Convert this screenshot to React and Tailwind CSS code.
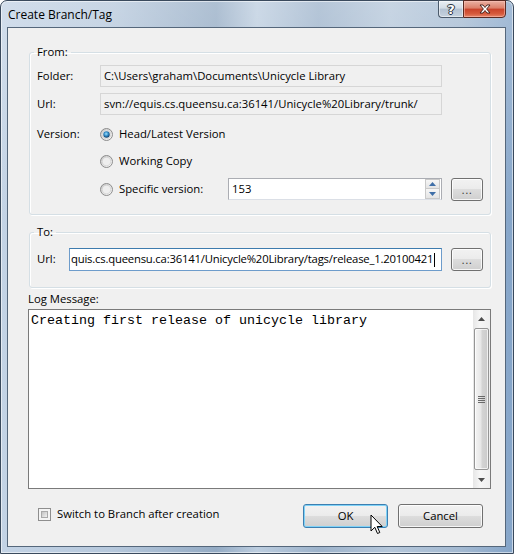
import React from "react";

const UI = "font-['Open_Sans',sans-serif]";

function Radio({ checked, id }) {
  return (
    <svg width="13" height="13" viewBox="0 0 13 13" className="shrink-0">
      <defs>
        <linearGradient id={`rg${id}`} x1="0" y1="0" x2="1" y2="1">
          <stop offset="0" stopColor="#c4c4c4" />
          <stop offset="1" stopColor="#ffffff" />
        </linearGradient>
        <radialGradient id={`rd${id}`} cx="0.45" cy="0.4" r="0.6">
          <stop offset="0" stopColor="#9fe3ff" />
          <stop offset="0.55" stopColor="#2f88c4" />
          <stop offset="1" stopColor="#0f3c66" />
        </radialGradient>
      </defs>
      <circle cx="6.5" cy="6.5" r="6" fill={`url(#rg${id})`} stroke="#8c8c8c" strokeWidth="1" />
      <circle cx="6.5" cy="6.5" r="4.3" fill="#eeeeee" stroke="#cfcfcf" strokeWidth="0.7" />
      {checked && <circle cx="6.5" cy="6.5" r="3.2" fill={`url(#rd${id})`} />}
    </svg>
  );
}

function Dots() {
  return (
    <button className="w-[32px] h-[23px] ml-[9px] shrink-0 rounded-[3px] border border-[#707070] bg-[linear-gradient(180deg,#f2f2f2_0%,#ebebeb_50%,#dddddd_50%,#cfcfcf_100%)] shadow-[inset_0_0_0_1px_rgba(255,255,255,0.8)] flex items-center justify-center">
      <span className="text-[10px] leading-none text-[#333] tracking-[0.5px] font-['DejaVu_Sans',sans-serif] mt-[3px]">...</span>
    </button>
  );
}

function Arrow({ up }) {
  return (
    <svg width="7" height="4" viewBox="0 0 7 4">
      <path d={up ? "M0 4 L3.5 0 L7 4 Z" : "M0 0 L7 0 L3.5 4 Z"} fill="#4d4d4d" />
    </svg>
  );
}

function SpinArrow({ up }) {
  return (
    <svg width="7" height="4" viewBox="0 0 7 4">
      <path d={up ? "M0 4 L3.5 0 L7 4 Z" : "M0 0 L7 0 L3.5 4 Z"} fill="#3f6fa8" />
    </svg>
  );
}

export default function App() {
  return (
    <div className={`w-[514px] h-[554px] bg-white ${UI} text-[11.3px] text-black`}>
      <div className="relative w-[514px] h-[554px] rounded-t-[7px] border border-[#3a4a5d] shadow-[inset_0_0_0_1px_rgba(255,255,255,0.55)] bg-[linear-gradient(180deg,rgba(255,255,255,0.25)_0%,rgba(255,255,255,0)_40%),linear-gradient(90deg,#c3d3e5_0%,#b6c8dc_22%,#94abc4_42%,#bccddf_50%,#9db3cb_62%,#b5c7da_76%,#a3b9d1_90%,#85a5c9_100%)] flex flex-col">
        {/* Title bar */}
        <div className="h-[26px] flex items-start justify-between shrink-0">
          <div className="pl-[7px] pt-[6px] leading-[15px] text-[12px] text-black">Create Branch/Tag</div>
          <div className="flex -mt-[1px] mr-[7px]">
            <div className="w-[25px] h-[18px] rounded-bl-[4px] border border-[#4b5a6b] border-r-0 bg-[linear-gradient(180deg,#e9eef4_0%,#d3dce6_45%,#b4c2d2_50%,#c6d2de_100%)] shadow-[inset_0_0_0_1px_rgba(255,255,255,0.5)] flex items-center justify-center">
              <span className="text-[13px] font-bold leading-none text-white font-['DejaVu_Sans',sans-serif] [text-shadow:0_0_1px_#2a3340,1px_0_0_#2a3340,-1px_0_0_#2a3340,0_1px_0_#2a3340,0_-1px_0_#2a3340]">?</span>
            </div>
            <div className="w-[43px] h-[18px] rounded-br-[4px] border border-[#5a2a22] bg-[linear-gradient(180deg,#eab1a3_0%,#dc7f69_45%,#c9422a_50%,#d65a3c_80%,#e7866a_100%)] shadow-[inset_0_0_0_1px_rgba(255,200,190,0.5)] flex items-center justify-center">
              <svg width="12" height="10" viewBox="0 0 12 10">
                <path d="M1 1 L4 1 L6 3.5 L8 1 L11 1 L7.6 5 L11 9 L8 9 L6 6.5 L4 9 L1 9 L4.4 5 Z" fill="#ffffff" stroke="#3a1a14" strokeWidth="0.9" strokeLinejoin="round" />
              </svg>
            </div>
          </div>
        </div>

        {/* Client area */}
        <div className="ml-[6px] mr-[7px] mb-[6px] flex-1 border border-[#55677b] bg-[#f0f0f0] pl-[20px] pr-[14px] pt-[16px] flex flex-col">
          {/* From group */}
          <fieldset className="ml-[1px] h-[171px] border border-[#d5dfe5] rounded-[3px] pl-[7px] pr-[7px] pt-[5px] shadow-[inset_1px_1px_0_#ffffff,1px_1px_0_#ffffff]">
            <legend className="-ml-[3px] px-[3px] leading-[16px]">From:</legend>
            <div className="flex items-center h-[22px]">
              <div className="w-[63px]">Folder:</div>
              <div className="w-[342px] h-[22px] border border-[#d6d6d6] bg-[#f0f0f0] flex items-center pl-[3px] whitespace-nowrap overflow-hidden">C:\Users\graham\Documents\Unicycle Library</div>
            </div>
            <div className="flex items-center h-[22px] mt-[6px]">
              <div className="w-[63px]">Url:</div>
              <div className="w-[342px] h-[22px] border border-[#d6d6d6] bg-[#f0f0f0] flex items-center pl-[3px] whitespace-nowrap overflow-hidden">svn://equis.cs.queensu.ca:36141/Unicycle%20Library/trunk/</div>
            </div>
            <div className="flex items-center h-[22px] mt-[8px]">
              <div className="w-[63px]">Version:</div>
              <Radio checked id="a" />
              <div className="ml-[6px]">Head/Latest Version</div>
            </div>
            <div className="flex items-center h-[22px] mt-[5px] pl-[63px]">
              <Radio id="b" />
              <div className="ml-[6px]">Working Copy</div>
            </div>
            <div className="flex items-center h-[22px] mt-[6px] pl-[63px]">
              <div className="w-[128px] flex items-center">
                <Radio id="c" />
                <div className="ml-[6px]">Specific version:</div>
              </div>
              <div className="w-[214px] h-[22px] border border-[#abadb3] border-b-[#dbdfe6] bg-white flex items-center">
                <div className="flex-1 pl-[3px]">153</div>
                <div className="w-[15px] h-[20px] mr-[1px] flex flex-col">
                  <div className="h-[10px] border border-[#c9c9c9] bg-[linear-gradient(180deg,#f6f6f6,#e4e4e4)] flex items-center justify-center"><SpinArrow up /></div>
                  <div className="h-[10px] border border-[#c9c9c9] border-t-0 bg-[linear-gradient(180deg,#f6f6f6,#e4e4e4)] flex items-center justify-center"><SpinArrow /></div>
                </div>
              </div>
              <Dots />
            </div>
          </fieldset>

          {/* To group */}
          <fieldset className="ml-[1px] mt-[9px] h-[64px] border border-[#d5dfe5] rounded-[3px] pl-[7px] pr-[7px] pt-[8px] shadow-[inset_1px_1px_0_#ffffff,1px_1px_0_#ffffff]">
            <legend className="-ml-[3px] px-[3px] leading-[16px]">To:</legend>
            <div className="flex items-center h-[23px]">
              <div className="w-[32px]">Url:</div>
              <div className="w-[373px] h-[23px] border border-[#6d9ccb] border-t-[#3d7bad] bg-white flex items-center pl-[1px] whitespace-nowrap overflow-hidden">
                <span className="tracking-[-0.2px]">quis.cs.queensu.ca:36141/Unicycle%20Library/tags/release_1.20100421</span>
                <span className="w-[1px] h-[14px] bg-black ml-[1px] shrink-0" />
              </div>
              <Dots />
            </div>
          </fieldset>

          {/* Log message */}
          <div className="mt-[3px] leading-[16px]">Log Message:</div>
          <div className="mt-[2px] w-[463px] h-[180px] border border-[#7a7a7a] bg-white flex">
            <div className="flex-1 pl-[2px] pt-[3px] font-['Liberation_Mono',monospace] text-[13.33px] leading-[15px] whitespace-pre">Creating first release of unicycle library</div>
            <div className="w-[17px] flex flex-col bg-[linear-gradient(90deg,#e6e6e6,#f6f6f6_40%,#efefef)]">
              <div className="h-[17px] flex items-center justify-center"><Arrow up /></div>
              <div className="flex-1 mx-[1px] my-[1px] rounded-[2px] border border-[#959595] bg-[linear-gradient(90deg,#f4f4f4_0%,#e7e7e7_45%,#d4d4d4_55%,#cbcbcb_100%)] shadow-[inset_0_0_0_1px_rgba(255,255,255,0.7)] flex items-center justify-center">
                <div className="flex flex-col gap-[1px]">
                  <div className="w-[7px] h-[1px] bg-[#6a6a6a]" />
                  <div className="w-[7px] h-[1px] bg-[#6a6a6a]" />
                  <div className="w-[7px] h-[1px] bg-[#6a6a6a]" />
                  <div className="w-[7px] h-[1px] bg-[#6a6a6a]" />
                </div>
              </div>
              <div className="h-[17px] flex items-center justify-center"><Arrow /></div>
            </div>
          </div>

          {/* Bottom row */}
          <div className="mt-[15px] flex items-start mr-[8px]">
            <div className="mt-[2px] ml-[10px] h-[16px] flex items-center">
              <div className="w-[13px] h-[13px] border border-[#8e8e8e] bg-[#f4f4f4] p-[2px]">
                <div className="w-full h-full border border-[#a9a9a9] bg-[linear-gradient(135deg,#c2c2c2,#f1f1f1)]" />
              </div>
              <div className="ml-[6px]">Switch to Branch after creation</div>
            </div>
            <div className="flex-1" />
            <button className="w-[85px] h-[24px] rounded-[3px] border border-[#3c7fb1] bg-[linear-gradient(180deg,#f2f2f2_0%,#ebebeb_50%,#dddddd_50%,#cfcfcf_100%)] shadow-[inset_0_0_0_1px_#7fd2f7] flex items-center justify-center">OK</button>
            <button className="w-[85px] h-[24px] ml-[10px] rounded-[3px] border border-[#707070] bg-[linear-gradient(180deg,#f2f2f2_0%,#ebebeb_50%,#dddddd_50%,#cfcfcf_100%)] shadow-[inset_0_0_0_1px_rgba(255,255,255,0.8)] flex items-center justify-center">Cancel</button>
          </div>
        </div>

        {/* Mouse cursor */}
        <svg className="absolute left-[369px] top-[513px]" width="14" height="21" viewBox="0 0 14 21">
          <path d="M1 1 L1 17 L4.8 13.3 L7.5 19.5 L9.8 18.5 L7.2 12.5 L12.2 12.5 Z" fill="#ffffff" stroke="#000000" strokeWidth="1" strokeLinejoin="miter" />
        </svg>
      </div>
    </div>
  );
}
